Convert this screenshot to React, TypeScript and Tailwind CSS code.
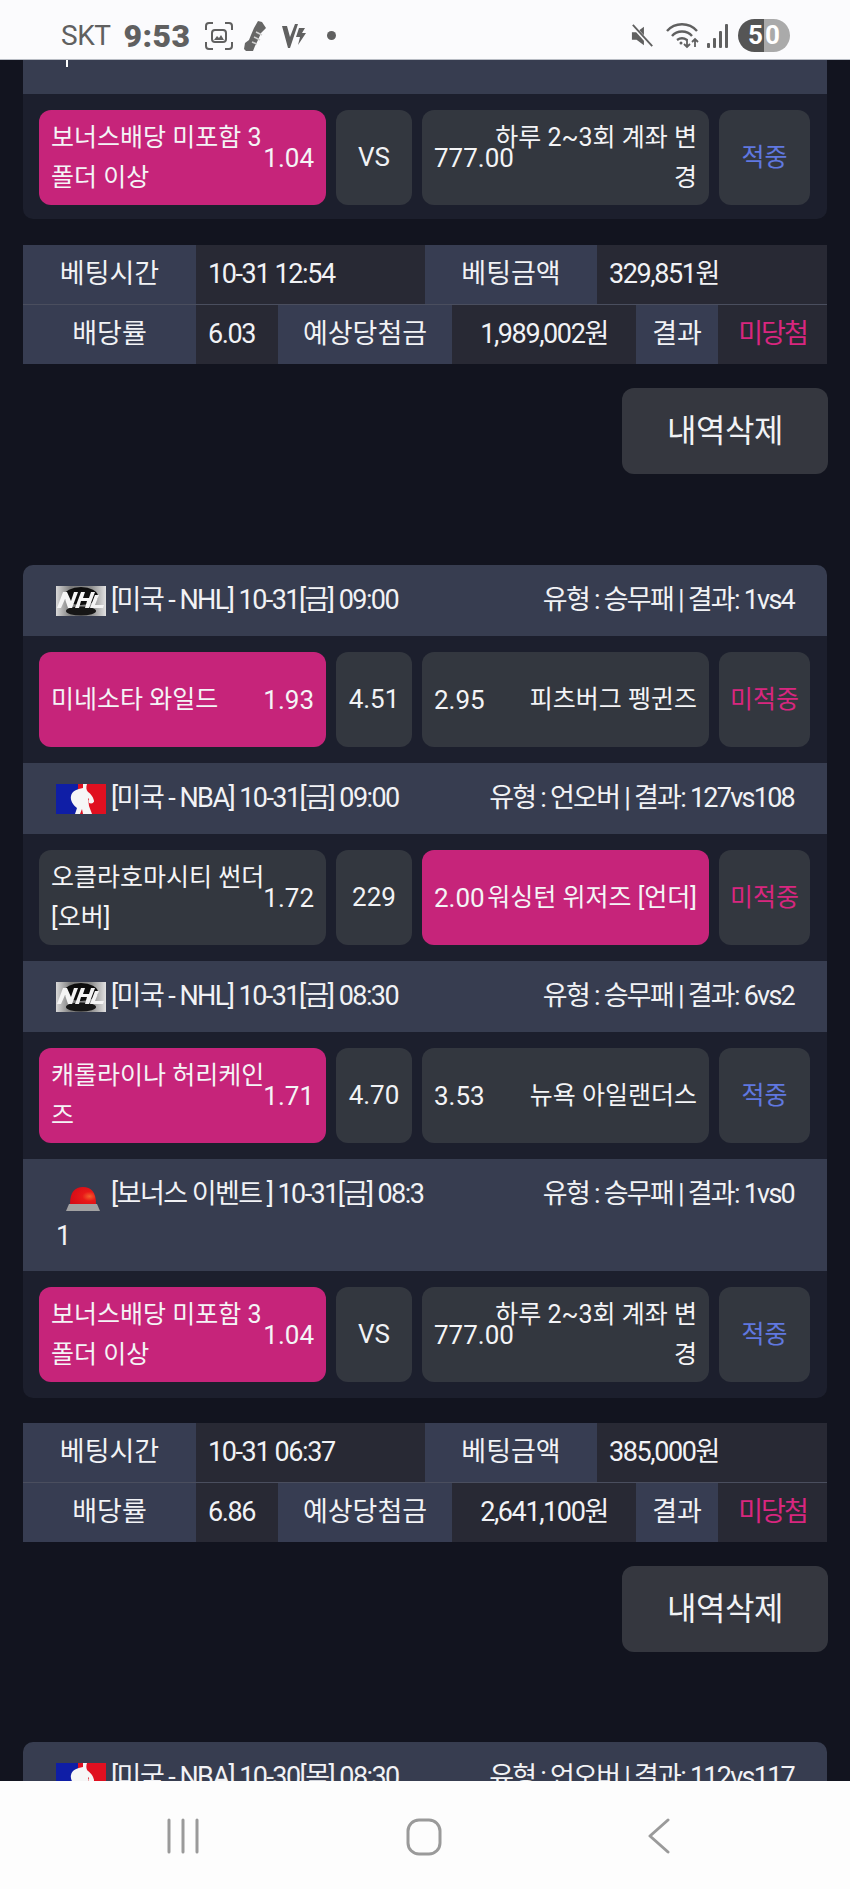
const sans = "font-['Roboto','Noto_Sans_CJK_KR',sans-serif]";

type Side = { text: string; odd: string; hit?: boolean };
type Match = {
  logo: "nhl" | "nba" | "siren";
  league: string;
  info: string;
  tall?: boolean;
  home: Side;
  mid: string;
  away: Side;
  result: string;
  win?: boolean;
};

function NhlLogo() {
  return (
    <svg viewBox="0 0 50 30" className="h-[30px] w-[50px] shrink-0 inline-block align-middle">
      <defs>
        <linearGradient id="nhl-bg" x1="0" y1="0" x2="1" y2="0">
          <stop offset="0" stopColor="#d8d8d8" />
          <stop offset="0.3" stopColor="#7a7a7a" />
          <stop offset="0.7" stopColor="#8c8c8c" />
          <stop offset="1" stopColor="#e2e2e2" />
        </linearGradient>
      </defs>
      <rect width="50" height="30" fill="url(#nhl-bg)" />
      <ellipse cx="25" cy="10" rx="17" ry="9" fill="#0d0d0d" />
      <ellipse cx="25" cy="25" rx="15" ry="4.5" fill="#161616" />
      <path d="M1 22 L7 6 L11 6 L15 15 L18 6 L22 6 L16 22 L12 22 L9 13 L5 22Z" fill="#f4f4f4" />
      <path d="M19 22 L25 6 L29 6 L27 12 L33 12 L35 6 L39 6 L33 22 L29 22 L31 15 L25 15 L23 22Z" fill="#f4f4f4" />
      <path d="M39 9 L43 9 L39 19 L48 19 L47 22 L34 22Z" fill="#f4f4f4" />
    </svg>
  );
}

function NbaLogo() {
  return (
    <svg viewBox="0 0 50 30" className="h-[30px] w-[50px] shrink-0 inline-block align-middle">
      <rect width="22" height="30" fill="#0f1ea6" />
      <rect x="22" width="28" height="30" fill="#e01020" />
      <path
        d="M27 0 L31 0 C30 3 30 6 32 8 C35 10 38 14 38 18 L35 19 C34 16 33 15 32 14 L33 22 L36 30 L27 30 L26 25 L24 30 L19 30 L21 24 C17 21 14 16 15 12 C16 7 21 5 27 4Z"
        fill="#f6f6f6"
      />
      <circle cx="35" cy="17" r="2.5" fill="#f6f6f6" />
    </svg>
  );
}

function SirenLogo() {
  return (
    <svg viewBox="0 0 50 30" className="h-[30px] w-[50px] shrink-0 inline-block align-middle">
      <defs>
        <radialGradient id="siren" cx="0.75" cy="0.55" r="0.8">
          <stop offset="0" stopColor="#f3602c" />
          <stop offset="0.35" stopColor="#e81818" />
          <stop offset="1" stopColor="#d50a16" />
        </radialGradient>
      </defs>
      <path d="M14 23 C14 11 19 6 27 6 C35 6 40 11 40 23Z" fill="url(#siren)" />
      <path d="M13 23 L41 23 L44 30 L10 30Z" fill="#a2a2a2" />
    </svg>
  );
}

function Logo({ kind }: { kind: Match["logo"] }) {
  if (kind === "nhl") return <NhlLogo />;
  if (kind === "nba") return <NbaLogo />;
  return <SirenLogo />;
}

function SideCell({ side, reverse }: { side: Side; reverse?: boolean }) {
  const bg = side.hit ? "bg-[#c6247a]" : "bg-[#33373f]";
  return (
    <div
      className={`${bg} flex h-[95px] w-[287px] items-center justify-between rounded-[12px] px-3 text-[25px] leading-[40px] text-[#f4f4f6]`}
    >
      {reverse ? (
        <>
          <span className="w-0 whitespace-nowrap text-[26px]">{side.odd}</span>
          <span className="w-[218px] break-all text-right">{side.text}</span>
        </>
      ) : (
        <>
          <span className="w-[218px] break-all">{side.text}</span>
          <span className="flex w-0 justify-end whitespace-nowrap text-[26px]">{side.odd}</span>
        </>
      )}
    </div>
  );
}

function BodyRow({ m, h }: { m: Pick<Match, "home" | "mid" | "away" | "result" | "win">; h: string }) {
  return (
    <div className={`${h} flex gap-[10px] bg-[#1c1f2d] pl-[16px] pr-[15px] pt-[16px]`}>
      <SideCell side={m.home} />
      <div className="flex h-[95px] w-[76px] items-center justify-center rounded-[12px] bg-[#33373f] text-[26px] text-[#f1f2f5]">
        {m.mid}
      </div>
      <SideCell side={m.away} reverse />
      <div
        className={`${m.win ? "text-[#6078e0]" : "text-[#d8267f]"} flex h-[95px] w-[91px] items-center justify-center rounded-[12px] bg-[#33373f] text-[25px]`}
      >
        {m.result}
      </div>
    </div>
  );
}

function MatchRow({ m }: { m: Match }) {
  const head = "flex justify-between bg-[#373d50] px-[33px] text-[27px] text-[#f1f2f5] tracking-[-1.55px]";
  return (
    <div>
      {m.tall ? (
        <div className={`${head} h-[112px] items-start pt-[14px] leading-[42px]`}>
          <div className="w-[372px] break-all">
            <Logo kind={m.logo} />
            <span className="ml-[5px]">{m.league}</span>
          </div>
          <span className="whitespace-nowrap tracking-[-1.75px]">{m.info}</span>
        </div>
      ) : (
        <div className={`${head} h-[71px] items-center`}>
          <div className="flex items-center whitespace-nowrap">
            <Logo kind={m.logo} />
            <span className="ml-[5px]">{m.league}</span>
          </div>
          <span className="whitespace-nowrap tracking-[-1.75px]">{m.info}</span>
        </div>
      )}
      <BodyRow m={m} h="h-[127px]" />
    </div>
  );
}

function BetTable({ time, amount, odds, payout }: { time: string; amount: string; odds: string; payout: string }) {
  const label = "flex items-center justify-center bg-[#373d52] text-[#f1f2f5]";
  const value = "flex items-center bg-[#282934] text-[#f1f2f5] tracking-[-1.4px]";
  return (
    <div className="mx-[23px] text-[27px]">
      <div className="flex h-[60px] border-b border-[#4a4e5e]">
        <div className={`${label} w-[173px]`}>베팅시간</div>
        <div className={`${value} w-[229px] pl-3`}>{time}</div>
        <div className={`${label} w-[172px]`}>베팅금액</div>
        <div className={`${value} flex-1 pl-3`}>{amount}</div>
      </div>
      <div className="flex h-[59px]">
        <div className={`${label} w-[173px]`}>배당률</div>
        <div className={`${value} w-[82px] pl-3`}>{odds}</div>
        <div className={`${label} w-[174px]`}>예상당첨금</div>
        <div className={`${value} w-[184px] justify-center bg-[#212431]`}>{payout}</div>
        <div className={`${label} w-[82px]`}>결과</div>
        <div className="flex flex-1 items-center justify-center bg-[#282934] text-[#d8267f] tracking-[-2px]">미당첨</div>
      </div>
    </div>
  );
}

function DeleteButton() {
  return (
    <div className="mt-[24px] mr-[22px] flex justify-end">
      <button className="h-[86px] w-[206px] rounded-[12px] bg-[#35373f] text-[32px] tracking-[-0.5px] text-[#f1f2f5]">
        내역삭제
      </button>
    </div>
  );
}

const bonus = {
  home: { text: "보너스배당 미포함 3폴더 이상", odd: "1.04", hit: true },
  mid: "VS",
  away: { text: "하루 2~3회 계좌 변경", odd: "777.00" },
  result: "적중",
  win: true,
};

const matches: Match[] = [
  {
    logo: "nhl",
    league: "[미국 - NHL] 10-31[금] 09:00",
    info: "유형 : 승무패 | 결과: 1vs4",
    home: { text: "미네소타 와일드", odd: "1.93", hit: true },
    mid: "4.51",
    away: { text: "피츠버그 펭귄즈", odd: "2.95" },
    result: "미적중",
  },
  {
    logo: "nba",
    league: "[미국 - NBA] 10-31[금] 09:00",
    info: "유형 : 언오버 | 결과: 127vs108",
    home: { text: "오클라호마시티 썬더 [오버]", odd: "1.72" },
    mid: "229",
    away: { text: "워싱턴 위저즈 [언더]", odd: "2.00", hit: true },
    result: "미적중",
  },
  {
    logo: "nhl",
    league: "[미국 - NHL] 10-31[금] 08:30",
    info: "유형 : 승무패 | 결과: 6vs2",
    home: { text: "캐롤라이나 허리케인즈", odd: "1.71", hit: true },
    mid: "4.70",
    away: { text: "뉴욕 아일랜더스", odd: "3.53" },
    result: "적중",
    win: true,
  },
  {
    logo: "siren",
    league: "[보너스 이벤트 ] 10-31[금] 08:31",
    info: "유형 : 승무패 | 결과: 1vs0",
    tall: true,
    ...bonus,
  },
];

function StatusBar() {
  return (
    <div className="flex h-[60px] items-center justify-between border-b border-[#b8bcc4] bg-[#fbfbfd] pl-[61px] pr-[60px] pt-[12px] text-[#606060]">
      <div className="flex items-center">
        <span className="text-[28px] tracking-[-0.5px]">SKT</span>
        <span className="ml-[13px] text-[32px] font-black leading-none tracking-[0.5px]">9:53</span>
        <svg viewBox="0 0 28 28" className="ml-[14px] h-[28px] w-[28px]" fill="none" stroke="#606060" strokeWidth="2">
          <path d="M1 8V4a3 3 0 0 1 3-3h4M20 1h4a3 3 0 0 1 3 3v4M27 20v4a3 3 0 0 1-3 3h-4M8 27H4a3 3 0 0 1-3-3v-4" />
          <rect x="7" y="8" width="14" height="12" rx="3" />
          <path d="M9 18l3-4 2 2 2-3 3 5z" fill="#606060" stroke="none" />
        </svg>
        <svg viewBox="0 0 24 32" className="ml-[10px] h-[32px] w-[24px]" fill="#666">
          <path d="M15 1l4 1 4 6-5 5-3 7-3 6-2 5-7 0-2-2 1-6 4-3 2-5 3-7z" />
          <path d="M13 12l6 3M11 17l6 3M9 22l5 2" stroke="#d0d0d0" strokeWidth="1.5" />
        </svg>
        <svg viewBox="0 0 24 26" className="ml-[15px] h-[26px] w-[24px]" fill="#606060">
          <path d="M0 3h5l3 11 5-13h3L8 25H6z" />
          <path d="M17 5h6l-3 5h4l-8 12 2-8h-4z" />
        </svg>
        <span className="ml-[21px] h-[9px] w-[9px] rounded-full bg-[#606060]" />
      </div>
      <div className="flex items-center">
        <svg viewBox="0 0 26 26" className="h-[26px] w-[24px]" fill="#606060">
          <path d="M1 9h5l8-6v20l-8-6H1z" />
          <path d="M2 2l20 22" stroke="#fbfbfd" strokeWidth="4" />
          <path d="M2 1l21 23" stroke="#606060" strokeWidth="2" />
        </svg>
        <svg viewBox="0 0 36 28" className="ml-[11px] h-[28px] w-[36px]" fill="none" stroke="#606060" strokeWidth="2.4">
          <path d="M1 9c8-9 22-9 30 0M6 14c5-6 15-6 20 0M11 18c3-2 7-2 10 0" />
          <circle cx="15" cy="21" r="1.5" fill="#606060" stroke="none" />
          <path d="M21 17v8M18 22l3 3 3-3M29 25v-8M26 20l3-3 3 3" strokeWidth="1.8" />
        </svg>
        <svg viewBox="0 0 24 26" className="ml-[4px] h-[26px] w-[24px]" fill="#606060">
          <rect x="1" y="20" width="3" height="5" rx="1" />
          <rect x="7" y="15" width="3" height="10" rx="1" />
          <rect x="13" y="8" width="3" height="17" rx="1" />
          <rect x="19" y="1" width="3" height="24" rx="1" />
        </svg>
        <div className="ml-[8px] flex h-[33px] w-[52px] overflow-hidden rounded-full text-[26px] font-bold leading-[33px] text-white">
          <span className="w-[26px] bg-[#555555] pr-[1px] text-right">5</span>
          <span className="w-[26px] bg-[#aaaaaa] pl-[1px]">0</span>
        </div>
      </div>
    </div>
  );
}

function NavBar() {
  return (
    <div className="flex h-[108px] items-start justify-between bg-[#fdfdfd] pl-[166px] pr-[179px] pt-[37px]">
      <svg viewBox="0 0 34 36" className="h-[36px] w-[34px]" stroke="#9a9a9a" strokeWidth="3" strokeLinecap="round">
        <path d="M3 2v32M17 2v32M31 2v32" />
      </svg>
      <svg viewBox="0 0 36 38" className="h-[38px] w-[36px]" fill="none" stroke="#9a9a9a" strokeWidth="3">
        <rect x="2" y="2" width="32" height="34" rx="11" />
      </svg>
      <svg viewBox="0 0 24 36" className="h-[36px] w-[24px]" fill="none" stroke="#9a9a9a" strokeWidth="3" strokeLinecap="round" strokeLinejoin="round">
        <path d="M21 2L3 18l18 16" />
      </svg>
    </div>
  );
}

export default function App() {
  return (
    <div className={`${sans} flex h-[1889px] w-[850px] flex-col overflow-hidden bg-[#12141f]`}>
      <StatusBar />
      <div className="h-[1721px] overflow-hidden">
        {/* first slip, scrolled off above the fold */}
        <div className="mx-[23px] overflow-hidden rounded-b-[10px]">
          <div className="h-[34px] bg-[#373d50] pl-[43px]">
            <div className="h-[7px] w-[2px] bg-white" />
          </div>
          <BodyRow m={bonus} h="h-[125px]" />
        </div>
        <div className="mt-[26px]">
          <BetTable time="10-31 12:54" amount="329,851원" odds="6.03" payout="1,989,002원" />
          <DeleteButton />
        </div>

        <div className="mx-[23px] mt-[91px] overflow-hidden rounded-[10px]">
          {matches.map((m, i) => (
            <MatchRow key={i} m={m} />
          ))}
        </div>
        <div className="mt-[25px]">
          <BetTable time="10-31 06:37" amount="385,000원" odds="6.86" payout="2,641,100원" />
          <DeleteButton />
        </div>

        <div className="mx-[23px] mt-[90px] overflow-hidden rounded-t-[10px]">
          <div className="flex h-[71px] items-center justify-between bg-[#373d50] px-[33px] text-[27px] text-[#f1f2f5] tracking-[-1.55px]">
            <div className="flex items-center">
              <NbaLogo />
              <span className="ml-[5px]">[미국 - NBA] 10-30[목] 08:30</span>
            </div>
            <span className="tracking-[-1.75px]">유형 : 언오버 | 결과: 112vs117</span>
          </div>
        </div>
      </div>
      <NavBar />
    </div>
  );
}
